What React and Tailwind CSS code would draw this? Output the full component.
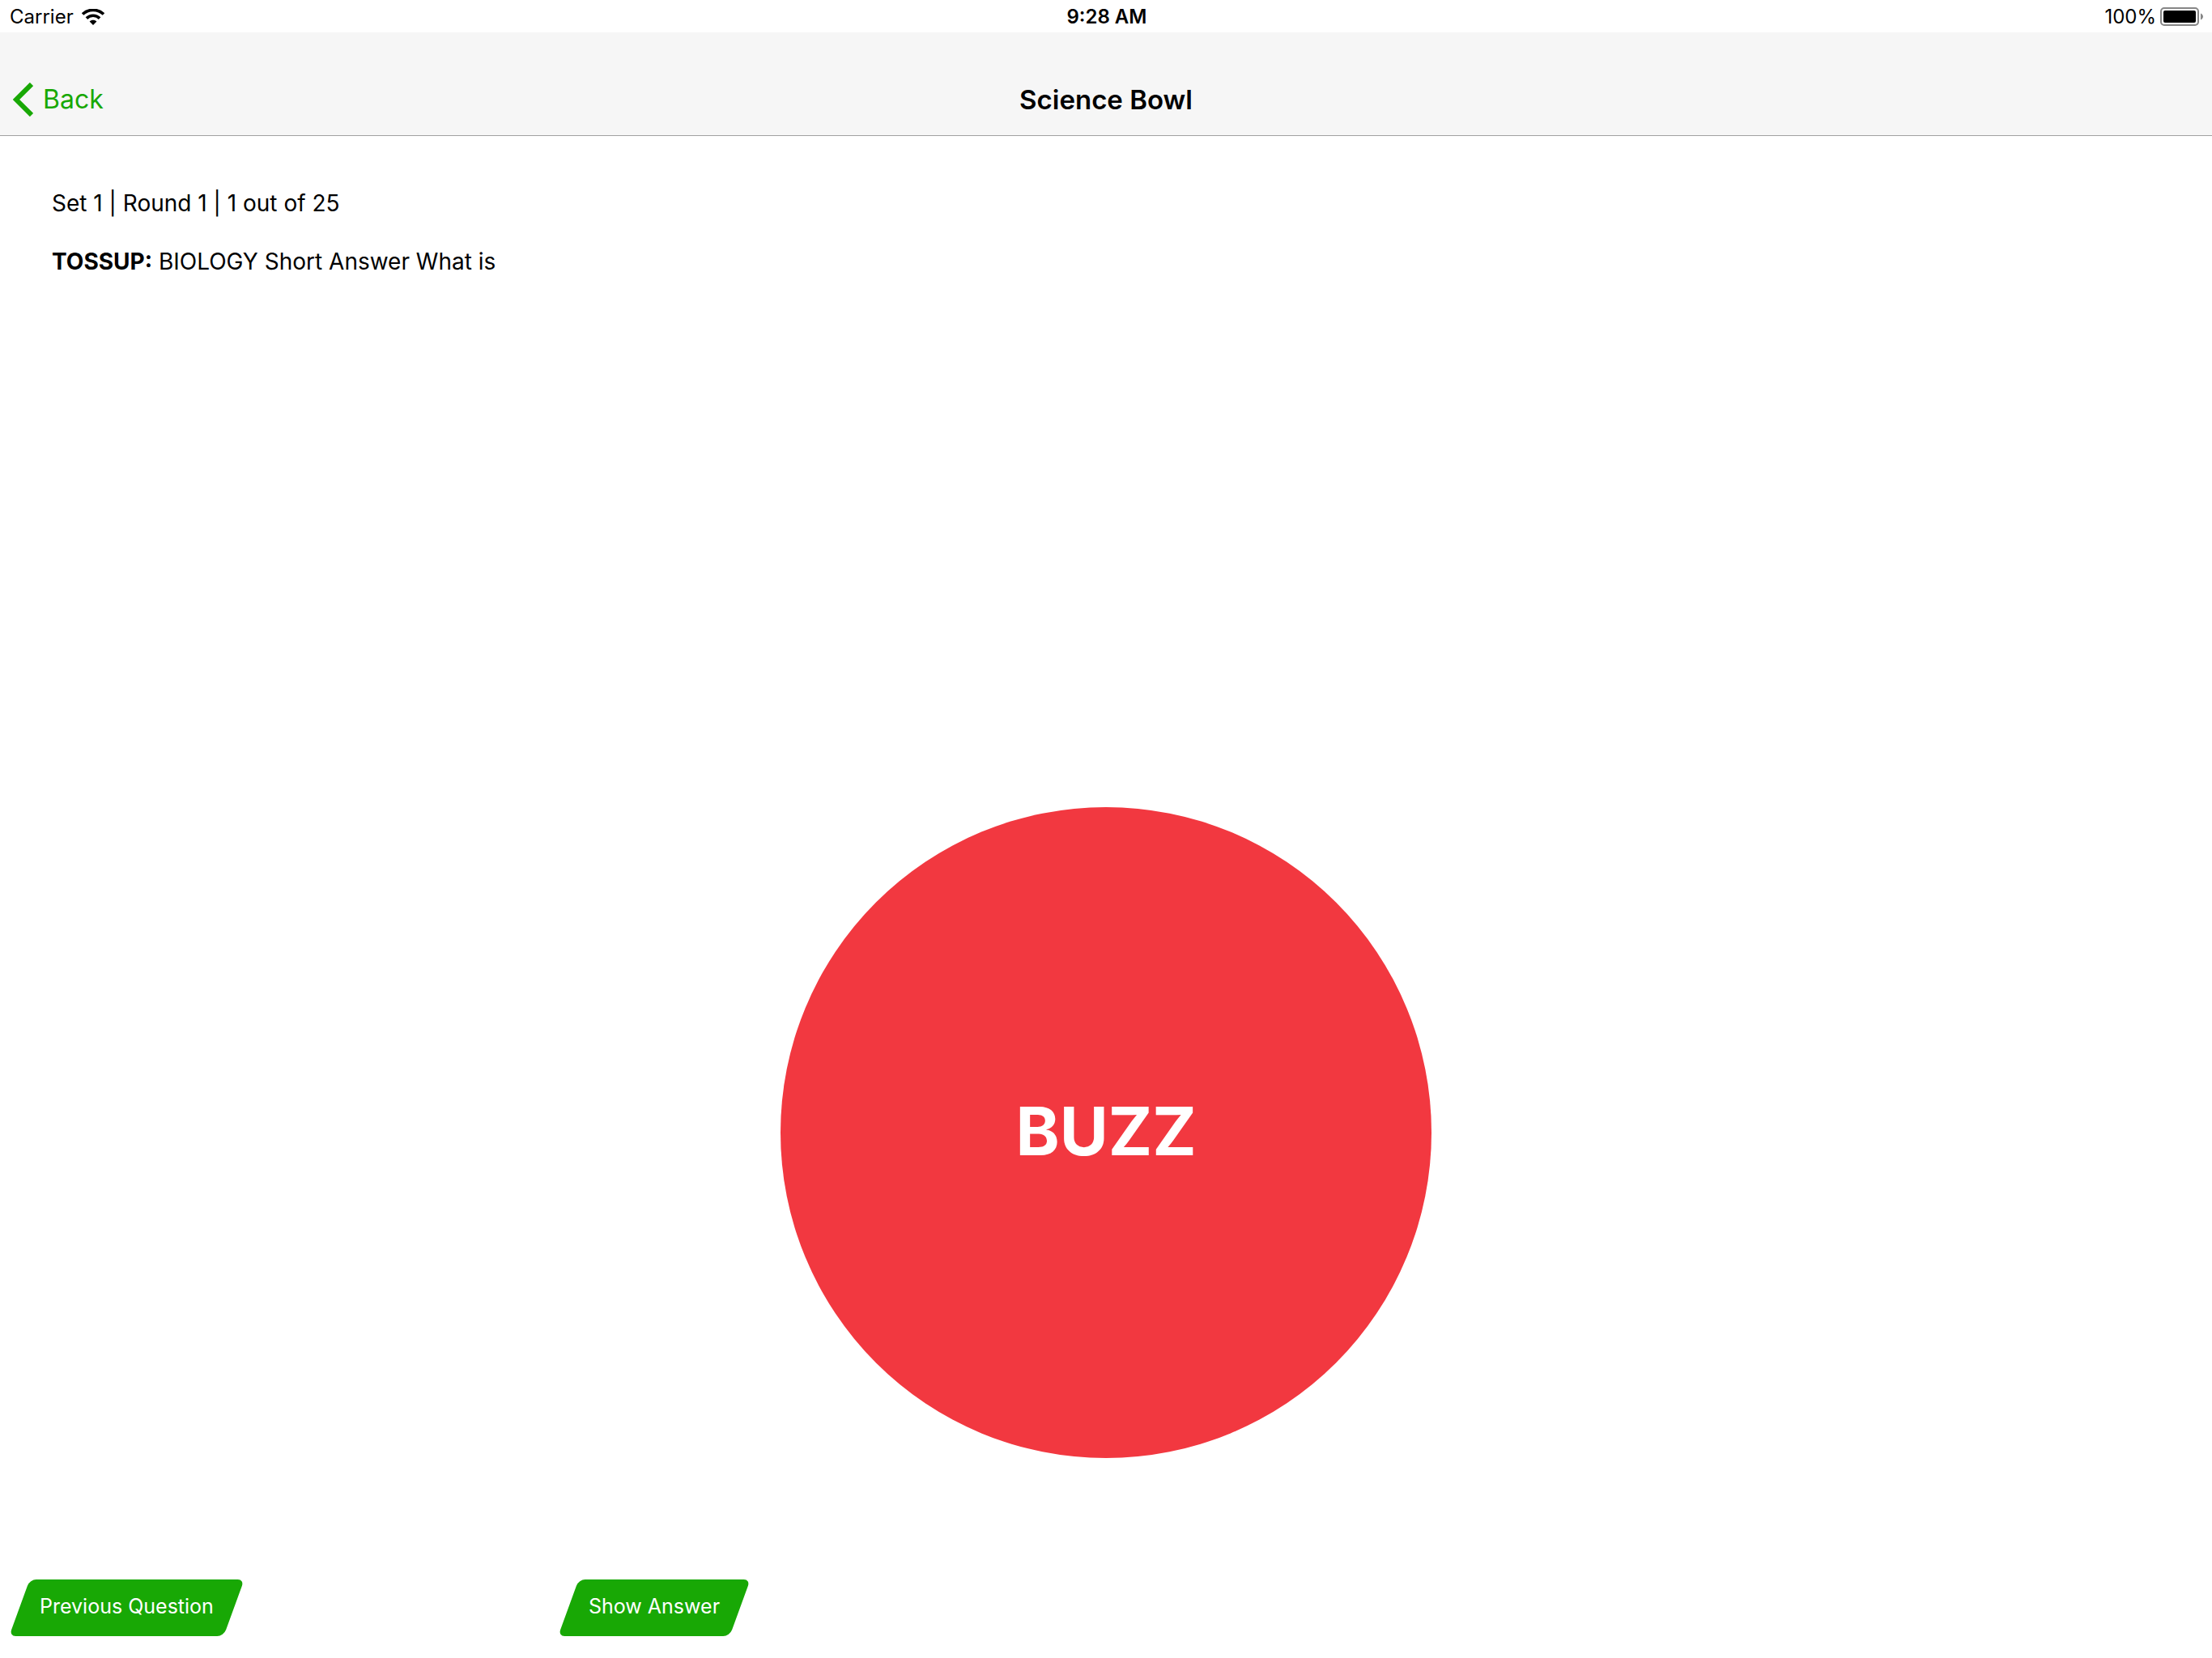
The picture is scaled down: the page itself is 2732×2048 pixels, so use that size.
function WifiIcon() {
  return (
    <svg className="h-5 w-7" viewBox="0 0 28 20" fill="none" aria-hidden="true">
      <path d="M1 6.6C8 -0.4 20 -0.4 27 6.6" stroke="#000" strokeWidth="3.6" />
      <path d="M5.9 11.6C10.4 7.2 17.6 7.2 22.1 11.6" stroke="#000" strokeWidth="3.6" />
      <path d="M14 20L9.6 15.4C12 13.2 16 13.2 18.4 15.4Z" fill="#000" />
    </svg>
  );
}

function BatteryIcon() {
  return (
    <svg className="h-6 w-[54px]" viewBox="0 0 54 24" fill="none" aria-hidden="true">
      <rect x="1" y="1" width="46" height="21" rx="4" stroke="#868686" strokeWidth="2" />
      <rect x="4" y="4" width="40" height="15" rx="2" fill="#000" />
      <path d="M50 7.5C52 8.5 53 10 53 11.5C53 13 52 14.5 50 15.5Z" fill="#868686" />
    </svg>
  );
}

function StatusBar() {
  return (
    <div className="grid h-10 grid-cols-3 items-center bg-white pl-3 pr-[10px] pt-0.5 text-2xl">
      <div className="flex items-center gap-[10px]">
        <span>Carrier</span>
        <WifiIcon />
      </div>
      <span className="text-center font-semibold">9:28 AM</span>
      <div className="flex items-center justify-end gap-[5px]">
        <span>100%</span>
        <BatteryIcon />
      </div>
    </div>
  );
}

function NavBar() {
  return (
    <header className="grid h-32 grid-cols-3 items-center border-b border-[#a0a0a0] bg-[#f6f6f6] pt-[39px]">
      <button type="button" className="flex items-center gap-3 justify-self-start pl-4 text-[32px] leading-10 text-[#18a805]">
        <svg className="h-[42px] w-[25px]" viewBox="0 0 25 42" fill="none" aria-hidden="true">
          <path d="M23 2L4 21L23 40" stroke="currentColor" strokeWidth="6" />
        </svg>
        Back
      </button>
      <h1 className="text-center text-[33px] font-semibold leading-10">Science Bowl</h1>
    </header>
  );
}

function SlantedButton({ children }) {
  return (
    <button
      type="button"
      className="relative isolate ml-[14px] h-[70px] justify-self-start px-[25px] pb-0.5 text-[25px] text-white before:absolute before:inset-0 before:-z-10 before:-skew-x-[20deg] before:rounded-lg before:bg-[#18a805]"
    >
      {children}
    </button>
  );
}

export default function App() {
  return (
    <div className="flex min-h-screen flex-col bg-white font-['Inter',sans-serif] text-black">
      <StatusBar />
      <NavBar />
      <main className="flex flex-1 flex-col">
        <section className="px-16 pt-[62px] text-[28px] leading-[42px]">
          <p>Set 1 | Round 1 | 1 out of 25</p>
          <p className="mt-[30px]">
            <strong className="font-bold">TOSSUP:</strong> BIOLOGY Short Answer What is
          </p>
        </section>
        <button
          type="button"
          className="mx-auto mb-[150px] mt-auto aspect-square w-[804px] rounded-full bg-[#f23840] pb-1 text-[82px] font-bold text-white"
        >
          BUZZ
        </button>
      </main>
      <footer className="grid grid-cols-4 px-[10px] pb-[27px]">
        <SlantedButton>Previous Question</SlantedButton>
        <SlantedButton>Show Answer</SlantedButton>
      </footer>
    </div>
  );
}
